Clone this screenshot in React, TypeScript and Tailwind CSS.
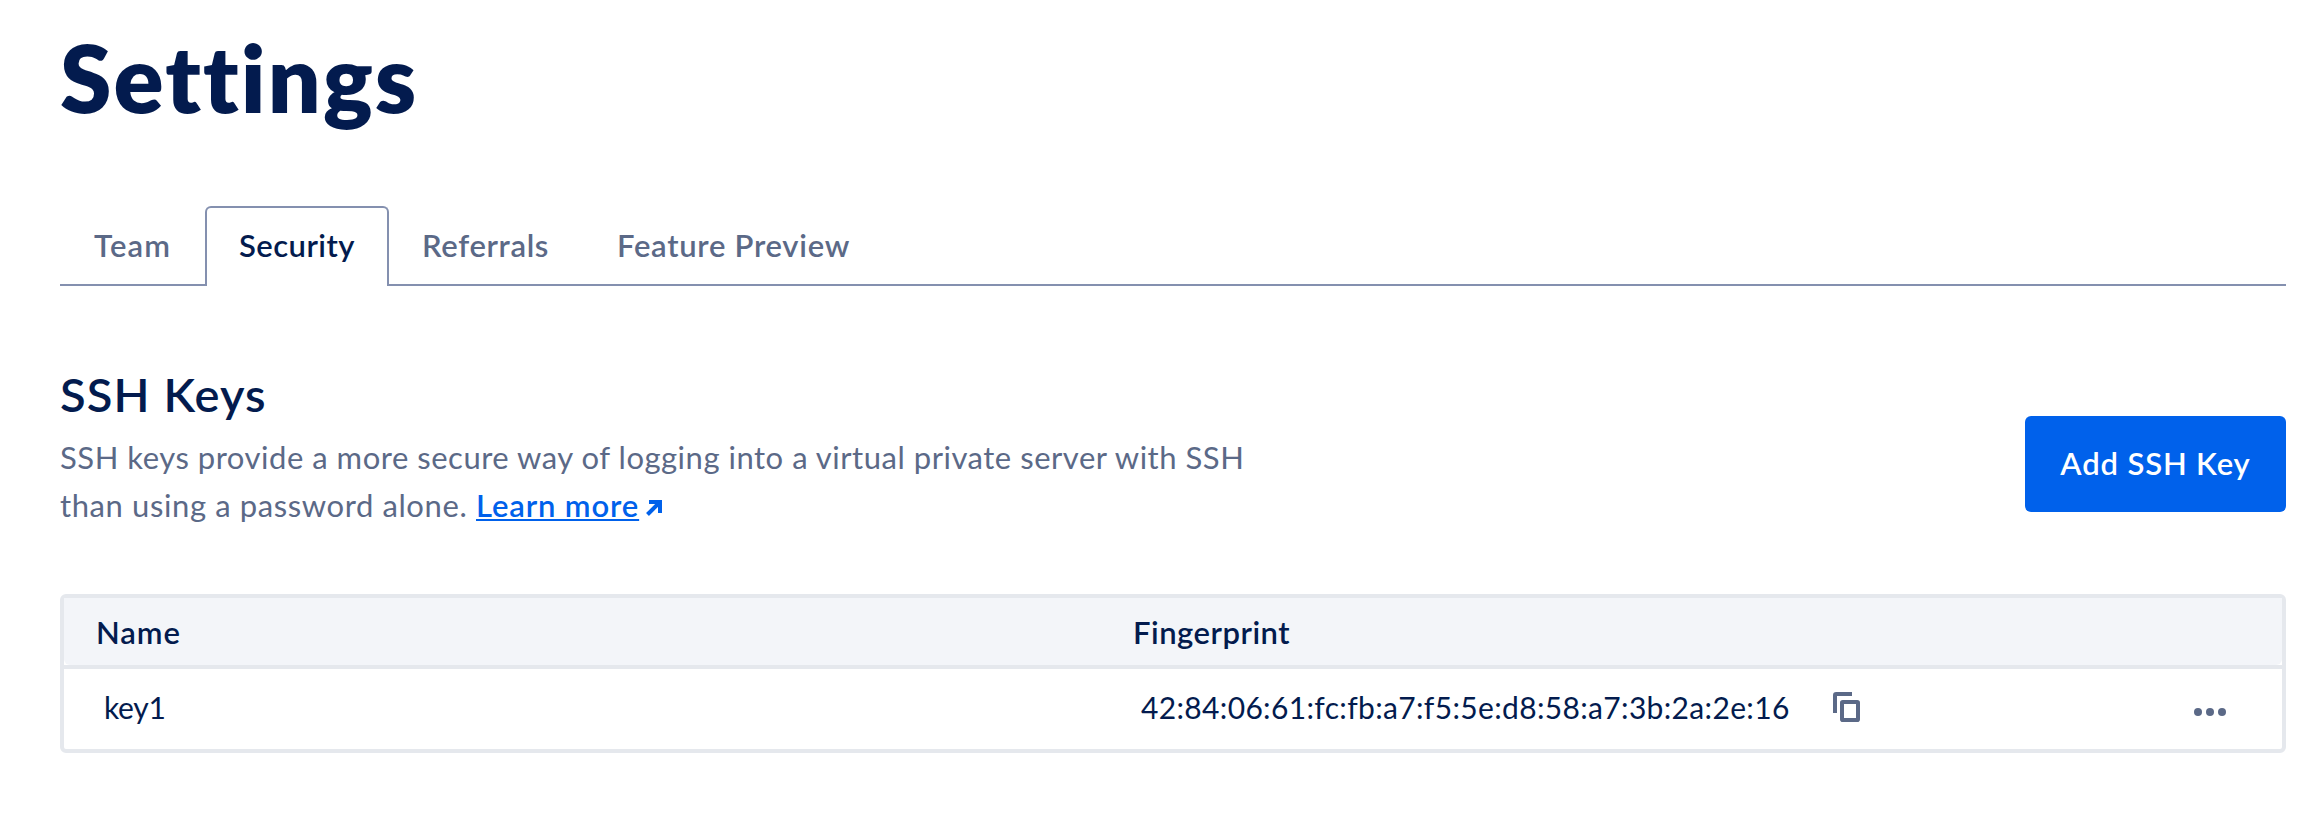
import React from "react";

const tabs = [
  { label: "Team", box: "w-[145px] pl-[34px] tracking-[1.2px]" },
  { label: "Security", box: "w-[184px] pl-[32px] tracking-[0.45px]", active: true },
  { label: "Referrals", box: "w-[194px] pl-[33px] tracking-[0.65px]" },
  { label: "Feature Preview", box: "w-[300px] pl-[34px] tracking-[0.72px]" },
];

function CopyIcon() {
  return (
    <svg className="h-[30px] w-[27px]" viewBox="0 0 27 30" fill="none" stroke="#5b6987">
      <path d="M2 21V3.2Q2 2 3.2 2H19" strokeWidth="4" strokeLinejoin="round" />
      <rect x="9" y="10" width="16" height="18" rx="0.8" strokeWidth="4" />
    </svg>
  );
}

function ArrowIcon() {
  return (
    <svg className="mb-[13px] ml-[7px] h-4 w-4 self-end" viewBox="0 0 16 16" fill="none" stroke="#0061eb" strokeWidth="4">
      <path d="M1.5 14.5L12.5 3.5" />
      <path d="M3 2H14V13" strokeLinejoin="miter" />
    </svg>
  );
}

export default function App() {
  return (
    <main className="flex h-[816px] w-[2322px] flex-col bg-white pr-9 pl-[60px] font-['Lato',sans-serif] text-[31px] text-[#031b4e] [font-variant-ligatures:none]">
      <h1 className="mt-[24px] h-[182px] text-[93px] leading-[106px] font-extrabold tracking-[2.1px] whitespace-nowrap">Settings</h1>

      <nav className="flex h-[80px] items-stretch">
        {tabs.map((t) => (
          <a
            key={t.label}
            className={
              t.active
                ? `${t.box} rounded-t-[6px] border-2 border-b-0 border-[#8490af] pt-[13px] leading-[48px] font-semibold whitespace-nowrap`
                : `${t.box} border-b-2 border-[#8490af] pt-[15px] leading-[48px] font-semibold whitespace-nowrap text-[#5b6987]`
            }
          >
            {t.label}
          </a>
        ))}
        <span className="flex-1 border-b-2 border-[#8490af]" />
      </nav>

      <section className="flex h-[308px] justify-between">
        <div className="pt-[80px]">
          <h2 className="h-[67px] text-[47px] leading-[56px] font-semibold tracking-[1.1px] whitespace-nowrap">SSH Keys</h2>
          <div className="text-[#5b6987]">
            <p className="h-[48px] leading-[48px] tracking-[0.52px] whitespace-nowrap">
              SSH keys provide a more secure way of logging into a virtual private server with SSH
            </p>
            <p className="flex h-[48px] leading-[48px] whitespace-nowrap">
              <span className="w-[416px] tracking-[0.6px]">than using a password alone.</span>
              <a className="font-semibold tracking-[0.87px] text-[#0061eb] underline decoration-2 underline-offset-[2px]">Learn more</a>
              <ArrowIcon />
            </p>
          </div>
        </div>
        <button className="mt-[130px] flex h-24 w-[261px] items-center justify-center rounded-[6px] bg-[#0061eb] pb-[2px] font-semibold tracking-[0.85px] whitespace-nowrap text-white">
          Add SSH Key
        </button>
      </section>

      <div className="h-[159px] rounded-[6px] border-4 border-[#e5e8ed]">
        <div className="flex h-[67px] rounded-b-[6px] bg-[#f3f5f9] pl-[32px] leading-[68px] font-semibold">
          <span className="w-[1037px] tracking-[0.9px]">Name</span>
          <span className="tracking-[0.5px]">Fingerprint</span>
        </div>
        <div className="flex h-[84px] border-t-4 border-[#e5e8ed] pl-[40px] text-[30px] leading-[77px]">
          <span className="w-[1037px] tracking-[-0.3px]">key1</span>
          <span className="w-[692px] tracking-[0.34px] whitespace-nowrap">42:84:06:61:fc:fb:a7:f5:5e:d8:58:a7:3b:2a:2e:16</span>
          <span className="pt-[23px]">
            <CopyIcon />
          </span>
          <svg className="mt-[39px] mr-[56px] ml-auto h-2 w-8" viewBox="0 0 32 8" fill="#5b6987">
            <circle cx="4" cy="4" r="4" />
            <circle cx="16" cy="4" r="4" />
            <circle cx="28" cy="4" r="4" />
          </svg>
        </div>
      </div>
    </main>
  );
}
